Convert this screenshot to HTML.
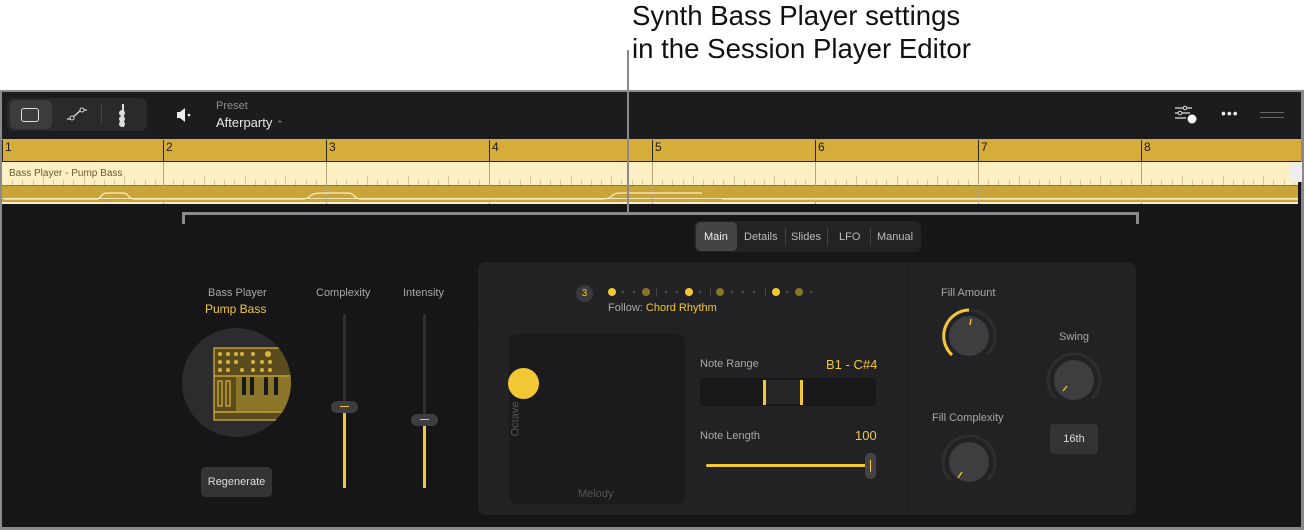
<!DOCTYPE html>
<html><head><meta charset="utf-8"><style>
*{margin:0;padding:0;box-sizing:border-box}
body{width:1304px;height:530px;background:#fff;position:relative;overflow:hidden;font-family:"Liberation Sans",sans-serif}
.a{position:absolute}
svg.a{overflow:visible}
.t{color:#a8a8aa;font-size:11px;position:absolute;white-space:nowrap}
.y{color:#f2c935}
</style></head><body>
<div class="a" style="left:632px;top:0px;font-size:27.6px;line-height:32.5px;color:#111;white-space:nowrap">Synth Bass Player settings<br>in the Session Player Editor</div>

<!-- window -->
<div class="a" style="left:0;top:90px;width:1304px;height:440px;background:#8a8a8c"></div>
<div class="a" style="left:2px;top:92px;width:1299px;height:435px;background:#161618"></div>
<!-- toolbar -->
<div class="a" style="left:2px;top:92px;width:1299px;height:47px;background:#1c1c1e"></div>
<div class="a" style="left:7px;top:98px;width:140px;height:33px;background:#2a2a2c;border-radius:7px"></div>
<div class="a" style="left:10px;top:100px;width:42px;height:29px;background:#3c3c3e;border-radius:6px"></div>
<div class="a" style="left:21px;top:108px;width:18px;height:14px;border:1.5px solid #ddd;border-radius:3px"></div>
<svg class="a" style="left:64px;top:104px" width="26" height="20"><path d="M3 15 H7 L17 6 H23" stroke="#ddd" stroke-width="1.3" fill="none"/><circle cx="8" cy="14" r="2" fill="#1c1c1e" stroke="#ddd"/><circle cx="18" cy="6" r="2" fill="#1c1c1e" stroke="#ddd"/></svg>
<div class="a" style="left:101px;top:104px;width:1px;height:20px;background:#444"></div>
<svg class="a" style="left:116px;top:104px" width="12" height="24"><rect x="6" y="0" width="2" height="23" fill="#ddd"/><circle cx="6" cy="9" r="3" fill="#ddd"/><circle cx="6" cy="15" r="3" fill="#ddd"/><circle cx="6" cy="20" r="3" fill="#ddd"/></svg>
<svg class="a" style="left:175px;top:106px" width="18" height="18"><path d="M2 6 H5 L10 2 V16 L5 12 H2 Z" fill="#eee"/><circle cx="14" cy="9" r="1.3" fill="#eee"/></svg>
<div class="t" style="left:216px;top:100px;color:#8e8e90">Preset</div>
<div class="a" style="left:216px;top:115px;color:#e8e8e8;font-size:13px">Afterparty <span style="font-size:9px;color:#999">⌃</span></div>
<svg class="a" style="left:1174px;top:104px" width="24" height="20"><g stroke="#ddd" stroke-width="1.3"><line x1="1" y1="4" x2="18" y2="4"/><line x1="1" y1="9" x2="16" y2="9"/><line x1="1" y1="14" x2="12" y2="14"/></g><circle cx="11" cy="4" r="1.8" fill="#1c1c1e" stroke="#ddd"/><circle cx="6" cy="9" r="1.8" fill="#1c1c1e" stroke="#ddd"/><circle cx="18" cy="15" r="4.5" fill="#fff"/></svg>
<div class="a" style="left:1221px;top:105px;color:#eee;font-size:14px;letter-spacing:1px">•••</div>
<div class="a" style="left:1260px;top:112px;width:24px;height:1px;background:#666"></div>
<div class="a" style="left:1260px;top:117px;width:24px;height:1px;background:#666"></div>

<!-- ruler -->
<div class="a" style="left:2px;top:139px;width:1299px;height:23px;background:#d6ad3a"></div>
<div class="a" style="left:2px;top:161px;width:1299px;height:1px;background:#222"></div>
<div class="a" style="left:2px;top:162px;width:1296px;height:24px;background:#fcf0c4"></div>
<div class="a" style="left:2px;top:186px;width:1296px;height:18px;background:#c9a43a;border-bottom:2px solid #fcf0c4"></div>
<div class="a" style="left:2px;top:185px;width:1296px;height:1px;background:#8a7a50"></div>
<div class="a" style="left:2px;top:198px;width:1296px;height:1px;background:#f5e6b4"></div>
<div class="a" style="left:9px;top:168px;font-size:10px;color:#6b5a2e">Bass Player - Pump Bass</div>
<div id="bars"></div>
<div class="a" style="left:1290px;top:162px;width:12px;height:20px;background:#eee;border-radius:3px 0 0 3px"></div>

<!-- callout -->
<div class="a" style="left:627px;top:50px;width:2px;height:163px;background:#8a8a8c"></div>
<div class="a" style="left:182px;top:212px;width:957px;height:3px;background:#8a8a8c"></div>
<div class="a" style="left:182px;top:212px;width:3px;height:12px;background:#8a8a8c"></div>
<div class="a" style="left:1136px;top:212px;width:3px;height:12px;background:#8a8a8c"></div>

<!-- tabs -->
<div class="a" style="left:694px;top:221px;width:227px;height:31px;background:#232325;border-radius:6px"></div>
<div class="a" style="left:696px;top:222px;width:41px;height:29px;background:#444446;border-radius:5px"></div>
<div class="a" style="left:704px;top:231px;font-size:11px;color:#eee">Main</div>
<div class="a" style="left:744px;top:231px;font-size:11px;color:#bbb">Details</div>
<div class="a" style="left:785px;top:228px;width:1px;height:17px;background:#444"></div>
<div class="a" style="left:791px;top:231px;font-size:11px;color:#bbb">Slides</div>
<div class="a" style="left:827px;top:228px;width:1px;height:17px;background:#444"></div>
<div class="a" style="left:839px;top:231px;font-size:11px;color:#bbb">LFO</div>
<div class="a" style="left:870px;top:228px;width:1px;height:17px;background:#444"></div>
<div class="a" style="left:877px;top:231px;font-size:11px;color:#bbb">Manual</div>

<!-- left -->
<div class="t" style="left:208px;top:287px">Bass Player</div>
<div class="a y" style="left:205px;top:302px;font-size:12px">Pump Bass</div>
<div class="a" style="left:182px;top:328px;width:109px;height:109px;border-radius:50%;background:#2c2c2e;overflow:hidden">
 <svg width="109" height="109"><g stroke="#d9b53a" fill="none" stroke-width="1.2"><rect x="32" y="20" width="80" height="72" fill="#5a4c1e"/><line x1="32" y1="48" x2="112" y2="48"/><rect x="36" y="53" width="4" height="25"/><rect x="44" y="53" width="4" height="25"/><line x1="32" y1="84" x2="112" y2="84"/></g><g fill="#8a7528"><rect x="54" y="49" width="58" height="34"/></g><g fill="#1a1a1a"><rect x="60" y="49" width="4" height="18"/><rect x="68" y="49" width="4" height="18"/><rect x="82" y="49" width="4" height="18"/><rect x="92" y="49" width="4" height="18"/></g><g fill="#d9b53a"><circle cx="38" cy="26" r="2"/><circle cx="46" cy="26" r="2"/><circle cx="54" cy="26" r="2"/><circle cx="60" cy="26" r="2"/><circle cx="71" cy="26" r="2"/><circle cx="86" cy="26" r="3"/><circle cx="38" cy="34" r="2"/><circle cx="46" cy="34" r="2"/><circle cx="54" cy="34" r="2"/><circle cx="71" cy="34" r="2"/><circle cx="80" cy="34" r="2"/><circle cx="88" cy="34" r="2"/><circle cx="38" cy="42" r="2"/><circle cx="46" cy="42" r="2"/><circle cx="60" cy="42" r="2"/><circle cx="71" cy="42" r="2"/><circle cx="80" cy="42" r="2"/><circle cx="88" cy="42" r="2"/></g></svg>
</div>
<div class="a" style="left:201px;top:467px;width:71px;height:30px;background:#343436;border-radius:5px;color:#ddd;font-size:11px;text-align:center;line-height:30px">Regenerate</div>
<div class="t" style="left:316px;top:287px">Complexity</div>
<div class="t" style="left:403px;top:287px">Intensity</div>
<div class="a" style="left:343px;top:314px;width:3px;height:174px;background:#2e2e30;border-radius:2px"></div>
<div class="a" style="left:343px;top:408px;width:3px;height:80px;background:#f2c935"></div>
<div class="a" style="left:331px;top:401px;width:27px;height:12px;background:#3e3e40;border-radius:6px"></div>
<div class="a" style="left:340px;top:406px;width:9px;height:1px;background:#f2c935"></div>
<div class="a" style="left:423px;top:314px;width:3px;height:174px;background:#2e2e30;border-radius:2px"></div>
<div class="a" style="left:423px;top:420px;width:3px;height:68px;background:#f2c935"></div>
<div class="a" style="left:411px;top:414px;width:27px;height:12px;background:#3e3e40;border-radius:6px"></div>
<div class="a" style="left:420px;top:419px;width:9px;height:1px;background:#f2c935"></div>

<!-- panel -->
<div class="a" style="left:478px;top:262px;width:658px;height:253px;background:#222224;border-radius:8px"></div>
<div class="a" style="left:907px;top:262px;width:1px;height:253px;background:#1a1a1c"></div>
<div class="a" style="left:478px;top:323px;width:429px;height:1px;background:#1c1c1e"></div>
<div class="a" style="left:576px;top:285px;width:17px;height:17px;border-radius:50%;background:#3a3a3c;color:#f2c935;font-size:10px;text-align:center;line-height:17px">3</div>
<svg class="a" style="left:605px;top:285px" width="215" height="15"><g fill="#f2c935"><circle cx="7" cy="7" r="4"/><circle cx="84" cy="7" r="4"/><circle cx="171" cy="7" r="4"/></g><g fill="#8a7428"><circle cx="41" cy="7" r="4"/><circle cx="115" cy="7" r="4"/><circle cx="194" cy="7" r="4"/></g><g fill="#444"><circle cx="18" cy="7" r="1.5"/><circle cx="29" cy="7" r="1.5"/><circle cx="61" cy="7" r="1.5"/><circle cx="72" cy="7" r="1.5"/><circle cx="95" cy="7" r="1.5"/><circle cx="127" cy="7" r="1.5"/><circle cx="138" cy="7" r="1.5"/><circle cx="149" cy="7" r="1.5"/><circle cx="182" cy="7" r="1.5"/><circle cx="206" cy="7" r="1.5"/></g><g fill="#444"><rect x="51" y="3" width="1" height="9"/><rect x="105" y="3" width="1" height="9"/><rect x="160" y="3" width="1" height="9"/></g></svg>
<div class="t" style="left:608px;top:302px">Follow: <span class="y">Chord Rhythm</span></div>
<div class="a" style="left:509px;top:334px;width:176px;height:170px;background:#1b1b1d;border-radius:8px"></div>
<div class="a" style="left:508px;top:368px;width:31px;height:31px;border-radius:50%;background:#f2c935"></div>
<div class="a" style="left:498px;top:413px;color:#555;font-size:11px;transform:rotate(-90deg)">Octave</div>
<div class="a" style="left:578px;top:488px;color:#555;font-size:11px">Melody</div>
<div class="t" style="left:700px;top:358px">Note Range</div>
<div class="a y" style="left:826px;top:357px;font-size:13px">B1 - C#4</div>
<div class="a" style="left:700px;top:378px;width:176px;height:28px;background:#18181a;border-radius:3px"></div>
<div class="a" style="left:764px;top:380px;width:38px;height:24px;background:#262628"></div>
<div class="a" style="left:763px;top:380px;width:3px;height:25px;background:#f2c935"></div>
<div class="a" style="left:800px;top:380px;width:3px;height:25px;background:#f2c935"></div>
<div class="t" style="left:700px;top:430px">Note Length</div>
<div class="a y" style="left:855px;top:428px;font-size:13px">100</div>
<div class="a" style="left:706px;top:464px;width:164px;height:3px;background:#f2c935;border-radius:2px"></div>
<div class="a" style="left:865px;top:453px;width:11px;height:26px;background:#444446;border-radius:5px"></div>
<div class="a" style="left:870px;top:460px;width:1px;height:12px;background:#f2c935"></div>

<!-- knobs -->
<div class="t" style="left:941px;top:287px">Fill Amount</div>
<svg class="a" style="left:940px;top:307px" width="58" height="58"><circle cx="29" cy="29" r="26" fill="none" stroke="#2e2e30" stroke-width="3" stroke-dasharray="122 41" transform="rotate(135 29 29)"/><path d="M12 48 A26 26 0 0 1 29 3" fill="none" stroke="#f2c935" stroke-width="3"/><circle cx="29" cy="29" r="20" fill="#3e3e40"/><line x1="30" y1="18" x2="31" y2="12" stroke="#f2c935" stroke-width="1.3"/></svg>
<div class="t" style="left:1059px;top:331px">Swing</div>
<svg class="a" style="left:1045px;top:351px" width="58" height="58"><circle cx="29" cy="29" r="26" fill="none" stroke="#2e2e30" stroke-width="3" stroke-dasharray="122 41" transform="rotate(135 29 29)"/><circle cx="29" cy="29" r="20" fill="#3e3e40"/><line x1="18" y1="40" x2="22" y2="35" stroke="#f2c935" stroke-width="1.3"/></svg>
<div class="a" style="left:1050px;top:424px;width:48px;height:30px;background:#343436;border-radius:4px;color:#ddd;font-size:11px;text-align:center;line-height:30px">16th</div>
<div class="t" style="left:932px;top:412px">Fill Complexity</div>
<svg class="a" style="left:940px;top:433px" width="58" height="58"><circle cx="29" cy="29" r="26" fill="none" stroke="#2e2e30" stroke-width="3" stroke-dasharray="122 41" transform="rotate(135 29 29)"/><circle cx="29" cy="29" r="20" fill="#3e3e40"/><line x1="18" y1="45" x2="22" y2="39" stroke="#f2c935" stroke-width="1.3"/></svg>

<script>
var b=document.getElementById('bars'),h='';
var xs=[2,163,326,489,652,815,978,1141];
for(var i=0;i<8;i++){var x=xs[i];
h+='<div class="a" style="left:'+x+'px;top:140px;width:1px;height:22px;background:#2a2410"></div>';
h+='<div class="a" style="left:'+(x+3)+'px;top:140px;font-size:12px;color:#1a1a1a">'+(i+1)+'</div>';
if(i>0)h+='<div class="a" style="left:'+x+'px;top:162px;width:1px;height:42px;background:#b8a878"></div>';
for(var k=1;k<16;k++){var tx=x+k*163/16;h+='<div class="a" style="left:'+tx+'px;top:'+(k%4==0?176:180)+'px;width:1px;height:'+(k%4==0?9:5)+'px;background:#d8c898"></div>';}}
h+='<div class="a" style="left:0;top:0"><svg class="a" style="left:2px;top:186px" width="1296" height="18"><path d="M2 13 H95 C100 13 98 7 105 7 H120 C128 7 125 13 133 13 H300 C310 13 305 7 320 7 H345 C355 7 350 13 360 13 H600 C612 13 608 7 618 7 H700 M720 13 H1296" stroke="#fbf0c0" stroke-width="1.2" fill="none"/></svg></div>';
b.innerHTML=h;
</script>
</body></html>
